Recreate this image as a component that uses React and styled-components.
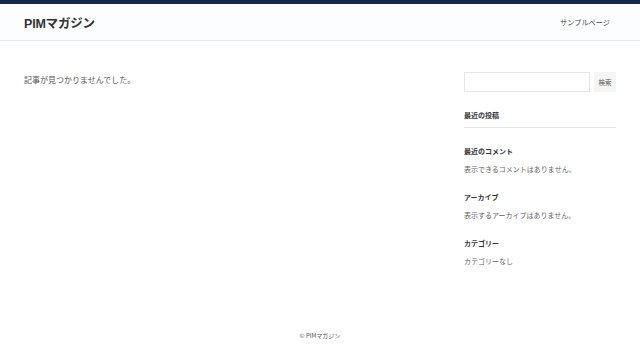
import React from "react";
import styled, { createGlobalStyle } from "styled-components";

const GlobalStyle = createGlobalStyle`
  html, body { margin: 0; padding: 0; background: #fff; }
  body {
    font-family: "Noto Sans CJK JP", "Liberation Sans", sans-serif;
    color: #333;
  }
`;

const Page = styled.div`
  width: 640px;
  min-height: 360px;
  display: flex;
  flex-direction: column;
  border-top: 4px solid #13294b;
  box-sizing: border-box;
`;

const Header = styled.header`
  height: 36px;
  background: #fbfdfe;
  border-bottom: 1px solid #ececec;
  display: flex;
  align-items: center;
  justify-content: space-between;
  padding: 0 30px 0 24px;
`;

const SiteTitle = styled.div`
  font-family: "Liberation Sans", "Noto Sans CJK JP", sans-serif;
  font-size: 12.5px;
  font-weight: bold;
  color: #333;
  letter-spacing: -0.2px;
`;

const NavLink = styled.a`
  font-size: 7.2px;
  color: #444;
  text-decoration: none;
`;

const Body = styled.div`
  display: flex;
  justify-content: space-between;
  padding: 31px 24px 0 24px;
  height: 280px;
  box-sizing: border-box;
`;

const Main = styled.main`
  font-size: 8px;
  color: #555;
  padding-top: 2px;
`;

const Sidebar = styled.aside`
  width: 152px;
  display: flex;
  flex-direction: column;
`;

const SearchRow = styled.form`
  display: flex;
  gap: 4px;
  margin: 0 0 17px;
`;

const SearchInput = styled.input`
  width: 126px;
  height: 20px;
  box-sizing: border-box;
  border: 1px solid #e6e6e6;
  background: #fff;
  padding: 0 4px;
`;

const SearchButton = styled.button`
  width: 22px;
  height: 20px;
  border: none;
  background: #f5f5f5;
  font-family: "Noto Sans CJK JP", sans-serif;
  font-size: 6.5px;
  color: #555;
  padding: 0;
`;

const Widget = styled.section`
  margin-bottom: ${(p) => (p.$last ? "0" : "16px")};
  ${(p) => p.$ruled && "border-bottom: 1px solid #e8e8e8; padding-bottom: 6px; margin-bottom: 17px;"}
`;

const WidgetTitle = styled.h2`
  margin: 0 0 ${(p) => (p.$solo ? "0" : "6px")};
  font-size: 7px;
  font-weight: bold;
  color: #333;
  line-height: 12px;
`;

const WidgetText = styled.p`
  margin: 0;
  font-size: 7px;
  color: #666;
  line-height: 12px;
`;

const Footer = styled.footer`
  text-align: center;
  font-size: 6px;
  color: #555;
  padding-top: 10px;
`;

const widgets = [
  { title: "最近のコメント", text: "表示できるコメントはありません。" },
  { title: "アーカイブ", text: "表示するアーカイブはありません。" },
  { title: "カテゴリー", text: "カテゴリーなし" },
];

export default function App() {
  return (
    <>
      <GlobalStyle />
      <Page>
        <Header>
          <SiteTitle>PIMマガジン</SiteTitle>
          <NavLink href="#">サンプルページ</NavLink>
        </Header>
        <Body>
          <Main>記事が見つかりませんでした。</Main>
          <Sidebar>
            <SearchRow onSubmit={(e) => e.preventDefault()}>
              <SearchInput type="text" />
              <SearchButton type="submit">検索</SearchButton>
            </SearchRow>
            <Widget $ruled>
              <WidgetTitle $solo>最近の投稿</WidgetTitle>
            </Widget>
            {widgets.map((w, i) => (
              <Widget key={w.title} $last={i === widgets.length - 1}>
                <WidgetTitle>{w.title}</WidgetTitle>
                <WidgetText>{w.text}</WidgetText>
              </Widget>
            ))}
          </Sidebar>
        </Body>
        <Footer>© PIMマガジン</Footer>
      </Page>
    </>
  );
}
